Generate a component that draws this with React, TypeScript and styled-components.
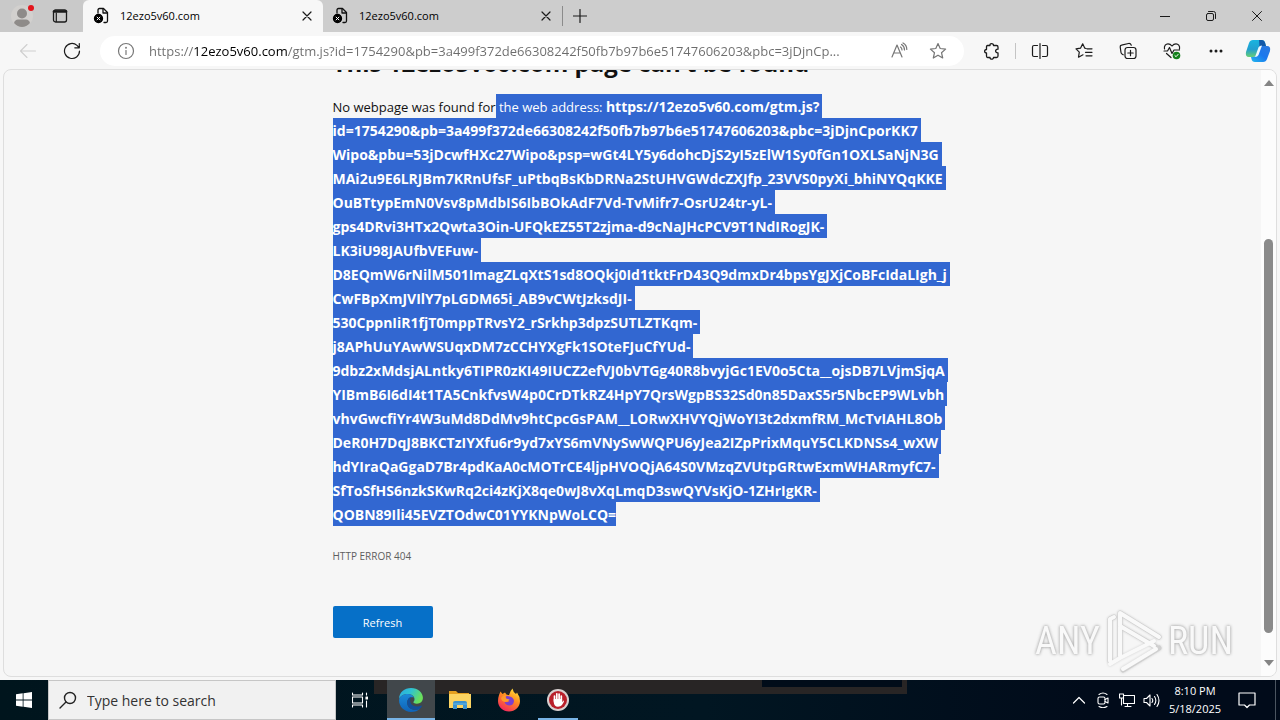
import React from 'react';
import styled, { createGlobalStyle } from 'styled-components';

const Global = createGlobalStyle`
  * { box-sizing: border-box; }
  body { margin: 0; font-family: "Open Sans", "Noto Sans", sans-serif; color: #111; }
  button { border: 0; padding: 0; background: none; font: inherit; color: inherit; }
  svg { display: block; }
`;

const Desktop = styled.div`
  display: flex;
  flex-direction: column;
  height: 100vh;
  overflow: hidden;
  background: #f7f7f7;
`;

const TabStrip = styled.header`
  display: flex;
  flex: none;
  height: 32px;
  background: #cdcdcd;
`;

const ProfileArea = styled.div`
  display: flex;
  align-items: center;
  width: 83px;
  padding-left: 10px;
  gap: 14px;
  background: #c9c9c9;
  border-bottom-right-radius: 4px;
`;

const IconButton = styled.button<{ $w?: number; $color?: string }>`
  display: flex;
  flex: none;
  align-items: center;
  justify-content: center;
  width: ${(p) => p.$w ?? 24}px;
  height: 100%;
  color: ${(p) => p.$color ?? '#1b1b1b'};
`;

const Tab = styled.div<{ $active?: boolean }>`
  display: flex;
  align-items: center;
  width: 240px;
  padding: 0 4px 0 9px;
  background: ${(p) => (p.$active ? '#f7f7f7' : 'transparent')};
  border-radius: ${(p) => (p.$active ? '6px 6px 0 0' : '0')};
`;

const InactiveTab = styled(Tab)`
  width: 239px;
  padding-left: 8px;
`;

const TabTitle = styled.span`
  flex: 1;
  padding-left: 10px;
  font-size: 11px;
  line-height: 16px;
  color: #000;
`;

const TabDivider = styled.span`
  align-self: center;
  width: 1px;
  height: 20px;
  background: #8b8b8b;
`;

const WindowControls = styled.div`
  display: flex;
  margin-left: auto;
`;

const Toolbar = styled.nav`
  display: flex;
  flex: none;
  align-items: center;
  height: 37px;
  padding: 0 2px 0 6px;
  background: #f7f7f7;
`;

const AddressBar = styled.label`
  display: flex;
  flex: 1;
  align-items: center;
  height: 30px;
  margin: 0 6px;
  padding: 0 6px 0 14px;
  border-radius: 15px;
  background: #fff;
`;

const AddressInput = styled.input`
  flex: 1;
  min-width: 0;
  height: 24px;
  margin: 0 2px 0 11px;
  padding: 0;
  border: 0;
  outline: 0;
  font-family: inherit;
  font-size: 13px;
  line-height: 24px;
  text-overflow: ellipsis;
  background: linear-gradient(90deg, #6c6c6c 45px, #000 45px, #000 139px, #6c6c6c 139px);
  background-clip: text;
  -webkit-text-fill-color: transparent;
`;

const ToolDivider = styled.span`
  width: 1px;
  height: 16px;
  margin: 0 2px 0 1px;
  background: #c4c4c4;
`;

const Viewport = styled.div`
  position: relative;
  display: flex;
  flex: 1;
  min-height: 0;
  margin: 0 3px 3px;
  border: 1px solid #dedede;
  border-radius: 8px;
  overflow: hidden;
  background: #f6f6f6;
`;

const Page = styled.main`
  flex: 1;
  min-width: 0;
  overflow: hidden;
`;

const Article = styled.article`
  width: 600px;
  max-width: 100%;
  margin: -25px auto 0;
`;

const Heading = styled.h1`
  margin: 0;
  font-size: 24px;
  line-height: 36px;
  font-weight: 700;
  white-space: nowrap;
`;

const Message = styled.p`
  margin: 13px 0 0;
  font-size: 14px;
  line-height: 26px;
  white-space: nowrap;
  color: #111;
`;

const Line = styled.span`
  display: block;
  height: 24px;
`;

const IntroLine = styled(Line)`
  font-size: 13px;
  strong { font-size: 14px; }
`;

const Selected = styled.span<{ $last?: boolean }>`
  display: inline-block;
  height: 24px;
  padding-right: ${(p) => (p.$last ? 0 : 3)}px;
  vertical-align: top;
  background: #3267d1;
  color: #fff;
  white-space: pre;
`;

const ErrorCode = styled.p`
  margin: 21px 0 0;
  font-size: 10px;
  line-height: 18px;
  color: #5e5e5e;
`;

const RefreshButton = styled.button`
  display: block;
  width: 100px;
  height: 32px;
  margin-top: 41px;
  border-radius: 2px;
  background: #0670c8;
  color: #fff;
  font-size: 11px;
`;

const Scrollbar = styled.div`
  display: flex;
  flex: none;
  flex-direction: column;
  align-items: center;
  width: 15px;
  padding: 9px 0;
  background: #fcfcfc;
`;

const ScrollSpace = styled.span<{ $grow: number }>`
  flex: ${(p) => p.$grow} 1 0;
`;

const ScrollThumb = styled.span`
  flex: 394 1 0;
  width: 9px;
  border-radius: 5px;
  background: #8a8a8a;
`;

const Watermark = styled.div`
  position: absolute;
  right: 43px;
  bottom: 2px;
  display: flex;
  align-items: center;
  gap: 5px;
  color: #f9f9f9;
  font-family: "Roboto Condensed", "Liberation Sans Narrow", Roboto, sans-serif;
  font-size: 38px;
  line-height: 66px;
  text-shadow: 0 0 3px #aaa;
  filter: drop-shadow(0 0 1px #ccc);
`;

const Taskbar = styled.footer`
  position: relative;
  display: flex;
  flex: none;
  height: 40px;
  background: linear-gradient(90deg, #00151d, #011622 55%, #010b1a 85%);
  color: #fff;
`;

const WindowEdge = styled.span`
  position: absolute;
  top: 0;
  left: 374px;
  width: 533px;
  height: 14px;
  padding: 0 5px 7px 388px;
  background: #282525;
  &::after {
    content: "";
    display: block;
    height: 7px;
    background: #010c19;
  }
`;

const StartButton = styled(IconButton)`
  width: 48px;
`;

const SearchBox = styled.label`
  display: flex;
  align-items: center;
  width: 288px;
  padding-left: 10px;
  gap: 10px;
  border: 1px solid #c6c6c6;
  background: #f1f1f1;
  color: #222;
`;

const SearchInput = styled.input`
  flex: 1;
  min-width: 0;
  padding: 0;
  border: 0;
  outline: 0;
  background: transparent;
  font-family: inherit;
  font-size: 14px;
  &::placeholder { color: #333; opacity: 1; }
`;

const AppRow = styled.div`
  position: relative;
  display: flex;
  gap: 1px;
  margin-left: 3px;
`;

const AppButton = styled.button<{ $active?: boolean; $running?: boolean }>`
  display: flex;
  align-items: center;
  justify-content: center;
  position: relative;
  width: 48px;
  height: 40px;
  background: ${(p) => (p.$active ? '#41474b' : 'transparent')};
  &::after {
    content: "";
    position: absolute;
    bottom: 0;
    left: ${(p) => (p.$active ? 0 : 4)}px;
    right: ${(p) => (p.$active ? 0 : 4)}px;
    height: 2px;
    background: ${(p) => (p.$active || p.$running ? '#78b4e6' : 'transparent')};
  }
`;

const Tray = styled.div`
  display: flex;
  align-items: center;
  margin-left: auto;
`;

const Clock = styled.time`
  width: 64px;
  font-size: 11px;
  line-height: 18px;
  text-align: center;
  white-space: nowrap;
`;

const ShowDesktop = styled.button`
  width: 5px;
  height: 40px;
  margin-left: 8px;
  border-left: 1px solid #4b5560;
`;

const urlLines = [
  'id=1754290&pb=3a499f372de66308242f50fb7b97b6e51747606203&pbc=3jDjnCporKK7',
  'Wipo&pbu=53jDcwfHXc27Wipo&psp=wGt4LY5y6dohcDjS2yI5zElW1Sy0fGn1OXLSaNjN3G',
  'MAi2u9E6LRJBm7KRnUfsF_uPtbqBsKbDRNa2StUHVGWdcZXJfp_23VVS0pyXi_bhiNYQqKKE',
  'OuBTtypEmN0Vsv8pMdbIS6IbBOkAdF7Vd-TvMifr7-OsrU24tr-yL-',
  'gps4DRvi3HTx2Qwta3Oin-UFQkEZ55T2zjma-d9cNaJHcPCV9T1NdIRogJK-',
  'LK3iU98JAUfbVEFuw-',
  'D8EQmW6rNilM501ImagZLqXtS1sd8OQkj0Id1tktFrD43Q9dmxDr4bpsYgJXjCoBFcIdaLIgh_j',
  'CwFBpXmJVIlY7pLGDM65i_AB9vCWtJzksdJI-',
  '530CppnIiR1fjT0mppTRvsY2_rSrkhp3dpzSUTLZTKqm-',
  'j8APhUuYAwWSUqxDM7zCCHYXgFk1SOteFJuCfYUd-',
  '9dbz2xMdsjALntky6TIPR0zKI49IUCZ2efVJ0bVTGg40R8bvyjGc1EV0o5Cta__ojsDB7LVjmSjqA',
  'YIBmB6I6dI4t1TA5CnkfvsW4p0CrDTkRZ4HpY7QrsWgpBS32Sd0n85DaxS5r5NbcEP9WLvbh',
  'vhvGwcfiYr4W3uMd8DdMv9htCpcGsPAM__LORwXHVYQjWoYI3t2dxmfRM_McTvIAHL8Ob',
  'DeR0H7DqJ8BKCTzIYXfu6r9yd7xYS6mVNySwWQPU6yJea2IZpPrixMquY5CLKDNSs4_wXW',
  'hdYIraQaGgaD7Br4pdKaA0cMOTrCE4ljpHVOQjA64S0VMzqZVUtpGRtwExmWHARmyfC7-',
  'SfToSfHS6nzkSKwRq2ci4zKjX8qe0wJ8vXqLmqD3swQYVsKjO-1ZHrIgKR-',
  'QOBN89Ili45EVZTOdwC01YYKNpWoLCQ=',
];

const shownUrl = 'https://12ezo5v60.com/gtm.js?id=1754290&pb=3a499f372de66308242f50fb7b97b6e51747606203&pbc=3jDjnCp...';

const Svg = ({ s = 16, children, w = 1.2 }: { s?: number; w?: number; children: React.ReactNode }) => (
  <svg width={s} height={s} viewBox={`0 0 ${s} ${s}`} fill="none" stroke="currentColor" strokeWidth={w} strokeLinecap="round" strokeLinejoin="round" aria-hidden="true">
    {children}
  </svg>
);

const PageErrorIcon = () => (
  <Svg s={18} w={1.3}>
    <path d="M6 6V3Q6 1.500 7.500 1.500H11.500L15.500 5.500V14Q15.500 15.500 14 15.500H12" />
    <path d="M11 1.800V6H15.200" />
    <circle cx="6.500" cy="11.500" r="4" fill="#000" stroke="#000" />
    <path d="M5.100 10.100l2.800 2.800M7.900 10.100l-2.800 2.800" stroke="#fff" strokeWidth="1" />
  </Svg>
);

const CloseIcon = () => <Svg s={10}><path d="M1 1l8 8M9 1L1 9" /></Svg>;

const tools: [string, React.ReactNode][] = [
  ['Split screen', <Svg s={18} key="s"><path d="M9 1.500v15M6.500 3.500H3Q1.500 3.500 1.500 5v8Q1.500 14.500 3 14.500H6.500M11.500 3.500H15Q16.500 3.500 16.500 5v8Q16.500 14.500 15 14.500H11.500" /></Svg>],
  ['Favorites', <Svg s={18} key="f"><path d="M11 6.500 9.800 6.200 7.700 1.800 5.500 6.200 1 6.900 4.300 10.200 3.500 15.200 8 12.800M12 6.800H17M10.500 10.300H17M11 13.800H17" /></Svg>],
  ['Collections', <Svg s={18} key="c"><rect x="6" y="5.500" width="11" height="11" rx="2.500" /><path d="M11.500 8.300v5.400M8.800 11h5.400M4.200 12.800 3.300 12.300Q2.200 11.700 2 10.500L1.200 5Q1 3.500 2.500 3.200L9.500 1.500Q11.500 1.200 12.300 3.200" /></Svg>],
  ['Browser essentials', <Svg s={18} key="b"><path d="M1.500 7C.8 3.500 3 1.800 5 1.800 7 1.800 8.200 3 9 4 9.800 3 11 1.800 13 1.800c2 0 4.200 1.700 3.500 5.200M3.500 11.500 8 15.500M1 9H4.500L6.500 5.500 9 11.500 11 8H16.500" /><circle cx="13.500" cy="13.500" r="3.800" fill="#13801b" stroke="none" /><path d="M11.900 13.600l1.200 1.100 2-2.300" stroke="#fff" strokeWidth="1" /></Svg>],
  ['Settings and more', <Svg s={16} key="m"><g fill="currentColor" stroke="none"><circle cx="3" cy="8" r="1.500" /><circle cx="8" cy="8" r="1.500" /><circle cx="13" cy="8" r="1.500" /></g></Svg>],
];

const Copilot = () => (
  <svg width="26" height="24" viewBox="0 0 26 24" aria-hidden="true">
    <defs>
      <linearGradient id="cpa" x1="0" y1="0" x2="0" y2="1"><stop stopColor="#19b4df" /><stop offset=".55" stopColor="#229fd0" /><stop offset="1" stopColor="#67cf74" /></linearGradient>
      <linearGradient id="cpb" x1="1" y1="0" x2="0" y2="1"><stop stopColor="#2e79dd" /><stop offset=".5" stopColor="#1b78ee" /><stop offset="1" stopColor="#22b8ee" /></linearGradient>
    </defs>
    <path d="M8 1H17Q19.500 1 20 3.500L21 7H17Q14.500 7 13.700 9.500L12 15Q11 18 8 18H4Q0 18 1 13L4 4Q5 1 8 1Z" fill="url(#cpa)" />
    <path d="M14 1H17Q19.500 1 20 3.500L21 7H17Q15 7 14.500 8Z" fill="#1459a8" />
    <path d="M18 23H10Q7 23 6.500 20L6 18H8Q11 18 12 15L13.700 9.500Q14.500 7 17 7H22Q26 7 25 12L22 20Q21 23 18 23Z" fill="url(#cpb)" />
    <path d="M13.500 8.500Q14.500 6.500 17 6.500L13.500 16Q12.500 18 10 18Z" fill="#eef9ff" />
  </svg>
);

const EdgeLogo = () => (
  <svg width="26" height="26" viewBox="0 0 24 24" aria-hidden="true">
    <defs>
      <linearGradient id="ea" x1="0" y1="0" x2="1" y2=".4"><stop stopColor="#2aa9e0" /><stop offset=".5" stopColor="#2fc3d2" /><stop offset="1" stopColor="#6be05a" /></linearGradient>
      <linearGradient id="eb" x1="0" y1="0" x2="0" y2="1"><stop stopColor="#1b8ad8" /><stop offset="1" stopColor="#0f63b8" /></linearGradient>
    </defs>
    <path d="M1 11C1 5 6 1 12 1c6.500 0 11 4.500 11 9 0 3.500-2.500 5.500-5.500 5.500-2.500 0-3.700-1-3.200-1.800.8-1 .9-1.700.9-2.700C15.200 8.500 12.500 6.500 9 6.500 5 6.500 2 8.500 1 11Z" fill="url(#ea)" />
    <path d="M1 12C1.500 8.500 5 6.500 9 6.500c3 0 5 1.500 5.800 3.200C11 8.500 8.500 11 8.500 14.500c0 4 3.500 6.500 7 6.500 2 0 3.500-.5 5-1.500C18.500 22 15.500 23 12 23 6 23 .7 18 1 12Z" fill="url(#eb)" />
    <path d="M8.500 14.500C8.500 11.500 10 9.500 12 9.200 9.500 14 13 18 17.500 18c1.500 0 2.500-.4 3.500-.8 .8-.3 1.200.5.7 1.200-1.500 2-3.700 3-6.200 2.600C11.500 20.500 8.500 18.500 8.500 14.500Z" fill="#124f9b" />
  </svg>
);

const Explorer = () => (
  <svg width="22" height="20" viewBox="0 0 22 20" aria-hidden="true">
    <path d="M0 1H7L9 3H20V8H0Z" fill="#e5a020" />
    <path d="M0 4H22V18H0Z" fill="#fcd462" />
    <path d="M4 19V13Q4 11 6 11H16Q18 11 18 13V19H14V15H8V19Z" fill="#3b93cf" />
    <path d="M4 14H18" stroke="#66b9e5" />
  </svg>
);

const Firefox = () => (
  <svg width="24" height="24" viewBox="0 0 24 24" aria-hidden="true">
    <defs><linearGradient id="ff" x1=".85" y1="0" x2=".3" y2="1"><stop stopColor="#ffe93a" /><stop offset=".45" stopColor="#ff8d20" /><stop offset="1" stopColor="#f5265e" /></linearGradient></defs>
    <path d="M2 7 3.500 3.500 5.500 6 8 4.500 9.500 6.500 12 7Q13 3 15.500.5 16 4 19 6L20 4.500Q23 8.500 23 13C23 19 18 23.500 12 23.500S1 19 1 13Q1 10 2 7Z" fill="url(#ff)" />
    <path d="M8 9Q10 7.500 12.500 8.500 16.500 9 17 13 16.500 17.500 12 17.500 8 17 7.500 13.500 10.500 15 12.500 13 10 12.500 8 9Z" fill="#7a3fd0" />
    <path d="M4 10Q6 6.500 9.500 7 8 8.500 9 10.500L12.500 11.500Q11 14 8 14 4.500 13.500 4 10Z" fill="#ff9a2b" />
  </svg>
);

const HandApp = () => (
  <svg width="24" height="24" viewBox="0 0 24 24" aria-hidden="true">
    <circle cx="12" cy="12" r="11" fill="#d8d0d0" /><circle cx="12" cy="12" r="9" fill="#b91f2a" />
    <path d="M8.500 13V8M10.800 12V5.800M13.100 12V6M15.300 13V8" stroke="#fff" strokeWidth="1.700" strokeLinecap="round" />
    <path d="M7.700 11H16.100V14L18 12.300Q18.500 14 16 17 14.500 18.800 12 18.800 8 18.500 7.700 14Z" fill="#fff" />
  </svg>
);

export default function App() {
  return (
    <Desktop>
      <Global />
      <TabStrip>
        <ProfileArea>
          <IconButton aria-label="Profile">
            <svg width="24" height="24" viewBox="0 0 24 24"><circle cx="12" cy="12" r="11" fill="#d2d0ce" /><circle cx="12" cy="9.500" r="5" fill="#8e8b89" /><path d="M4 19Q5 15.500 8 15.500H16Q19 15.500 20 19 16.500 23 12 23T4 19Z" fill="#8e8b89" /><circle cx="21" cy="4" r="3" fill="#e3141c" /></svg>
          </IconButton>
          <IconButton aria-label="Tab actions">
            <Svg s={16} w={1.3}><rect x="1.500" y="2" width="13" height="12" rx="2" /><path d="M2 3.500H14" strokeWidth="2.600" /><path d="M4.300 5V13.500" strokeWidth="1.200" /></Svg>
          </IconButton>
        </ProfileArea>
        <Tab $active><PageErrorIcon /><TabTitle>12ezo5v60.com</TabTitle><IconButton aria-label="Close tab"><CloseIcon /></IconButton></Tab>
        <InactiveTab><PageErrorIcon /><TabTitle>12ezo5v60.com</TabTitle><IconButton aria-label="Close tab"><CloseIcon /></IconButton></InactiveTab>
        <TabDivider />
        <IconButton $w={34} aria-label="New tab"><Svg s={14}><path d="M7 .5v13M.5 7h13" /></Svg></IconButton>
        <WindowControls>
          <IconButton $w={46} aria-label="Minimize"><Svg s={10} w={1}><path d="M0 5.500H10" /></Svg></IconButton>
          <IconButton $w={46} aria-label="Restore"><Svg s={10} w={1}><rect x=".5" y="2.500" width="7" height="7" rx="1.500" /><path d="M2.500 .5H7.500Q9.500 .5 9.500 2.500V7.500" /></Svg></IconButton>
          <IconButton $w={46} aria-label="Close"><Svg s={10} w={1}><path d="M.5 .5l9 9M9.500 .5l-9 9" /></Svg></IconButton>
        </WindowControls>
      </TabStrip>

      <Toolbar>
        <IconButton $w={44} $color="#cfcfcf" aria-label="Back"><Svg s={18} w={1.1}><path d="M16.500 9H1.500M8 2.500 1.500 9 8 15.500" /></Svg></IconButton>
        <IconButton $w={44} aria-label="Reload"><Svg s={18} w={1.2}><path d="M16.500 9A7.500 7.500 0 1 1 14 3.400L16 5.500M16.300 1.500V5.800H11.800" /></Svg></IconButton>
        <AddressBar>
          <Svg s={24} w={1.2}><g stroke="#777"><circle cx="12" cy="12" r="7.500" /><path d="M12 11.500v4" /><circle cx="12" cy="8.700" r=".4" /></g></Svg>
          <AddressInput aria-label="Address" defaultValue={shownUrl} />
          <IconButton $w={38} $color="#767676" aria-label="Read aloud"><Svg s={18}><path d="M2 15 7 3 12 15M3.800 11H10.200M10.500 5Q12 6 12 8M11.500 2.500Q14.500 4.200 14.500 8M13 1Q16.800 3 16.800 7.500" /></Svg></IconButton>
          <IconButton $w={40} $color="#767676" aria-label="Add to favorites"><Svg s={18}><path d="M9 1.500 11.200 6.500 16.600 7.100 12.500 10.700 13.700 16 9 13.200 4.300 16 5.500 10.700 1.400 7.100 6.800 6.500Z" /></Svg></IconButton>
        </AddressBar>
        <IconButton $w={44} aria-label="Extensions"><Svg s={18} w={1.3}><path d="M4.500 3.500H7C6.500 1 10.500 .8 10.500 3.500H13.500Q15 3.500 15 5V7.200C11.800 6.800 11.800 11.200 15 10.800V14Q15 15.500 13.500 15.500H10.500C10.500 17.800 6.800 17.600 7 15.500H4.500Q3.500 15.500 3.500 14V11C1 11 1 7.500 3.500 7.500V5Q3.500 3.500 4.500 3.500Z" /></Svg></IconButton>
        <ToolDivider />
        {tools.map(([name, icon]) => <IconButton key={name} $w={44} aria-label={name}>{icon}</IconButton>)}
        <IconButton $w={40} aria-label="Copilot"><Copilot /></IconButton>
      </Toolbar>

      <Viewport>
        <Page>
          <Article>
            <Heading>This 12ezo5v60.com page can’t be found</Heading>
            <Message>
              <IntroLine>No webpage was found for<Selected> the web address: <strong>https://12ezo5v60.com/gtm.js?</strong></Selected></IntroLine>
              {urlLines.map((text, i) => (
                <Line key={text}><Selected as="strong" $last={i === urlLines.length - 1}>{text}</Selected></Line>
              ))}
            </Message>
            <ErrorCode>HTTP ERROR 404</ErrorCode>
            <RefreshButton>Refresh</RefreshButton>
          </Article>
        </Page>
        <Scrollbar>
          <svg width="10" height="7" viewBox="0 0 10 7"><path d="M0 7 5 1l5 6Z" fill="#858585" /></svg>
          <ScrollSpace $grow={153} />
          <ScrollThumb />
          <ScrollSpace $grow={27} />
          <svg width="10" height="7" viewBox="0 0 10 7"><path d="M0 0H10L5 6Z" fill="#858585" /></svg>
        </Scrollbar>
        <Watermark>
          <span>ANY</span>
          <svg width="58" height="64" viewBox="0 0 58 64" fill="none" stroke="#f9f9f9" strokeWidth="4" strokeLinejoin="round" strokeLinecap="round">
            <path d="M5 52V10L9 8M15 47V4L54 28M15 17 51 38M18 61 54 39" stroke="#cfcfcf" strokeWidth="5" />
            <path d="M5 52V10L9 8M15 47V4L54 28M15 17 49 37M5 55 15 49 49 32M18 60 51 40" />
          </svg>
          <span>RUN</span>
        </Watermark>
      </Viewport>

      <Taskbar>
        <WindowEdge />
        <StartButton aria-label="Start"><svg width="16" height="16" viewBox="0 0 16 16" fill="#fff"><path d="M0 2.200 6.700 1.300V7.600H0ZM7.500 1.200 16 0V7.600H7.500ZM0 8.400H6.700V14.700L0 13.800ZM7.500 8.400H16V16L7.500 14.800Z" /></svg></StartButton>
        <SearchBox>
          <Svg s={18} w={1.4}><circle cx="11" cy="7" r="5.500" /><path d="M7 11 1 17" /></Svg>
          <SearchInput aria-label="Search" placeholder="Type here to search" />
        </SearchBox>
        <IconButton $w={48} $color="#fff" aria-label="Task view"><Svg s={16} w={1.1}><path d="M.5 1V3H10.500V1M.5 15V13H10.500V15M14.500 1V3M14.500 9V15" /><rect x=".5" y="5" width="10" height="6" /><rect x="14" y="5" width="1.500" height="2" fill="#fff" /></Svg></IconButton>
        <AppRow>
          <AppButton $active aria-label="Microsoft Edge"><EdgeLogo /></AppButton>
          <AppButton aria-label="File Explorer"><Explorer /></AppButton>
          <AppButton aria-label="Firefox"><Firefox /></AppButton>
          <AppButton $running aria-label="Blocker"><HandApp /></AppButton>
        </AppRow>
        <Tray>
          <IconButton $color="#fff" aria-label="Show hidden icons"><Svg s={14}><path d="M1.500 10 7 4.500 12.500 10" /></Svg></IconButton>
          <IconButton $color="#fff" aria-label="Meet now"><Svg s={16} w={1.1}><rect x="3" y="5" width="7" height="7" rx="1.500" /><path d="M10 7.500 13 6V11L10 9.500M4 2.500Q8 -.5 12 2.500M4 14.500Q8 17 12 14.500" /></Svg></IconButton>
          <IconButton $color="#fff" aria-label="Network"><Svg s={16} w={1.1}><path d="M4.500 3.500H15.500V11.500H4.500V6M8.500 11.500V14.500M6 14.500H12M.5 2H4.500V6H.5ZM2.500 6V13" /></Svg></IconButton>
          <IconButton $color="#fff" aria-label="Volume"><Svg s={17} w={1.1}><path d="M1 6.500H3.500L7 3V14L3.500 10.500H1ZM9 6.500Q10.500 8.500 9 10.500M11.500 4.500Q14.200 8.500 11.500 12.500M14 2.500Q18 8.500 14 14.500" /></Svg></IconButton>
          <Clock>8:10 PM<br />5/18/2025</Clock>
          <IconButton $w={40} $color="#fff" aria-label="Notifications"><Svg s={18}><path d="M1 2H17V14H11.500L9 16.500 6.500 14H1Z" /></Svg></IconButton>
          <ShowDesktop aria-label="Show desktop" />
        </Tray>
      </Taskbar>
    </Desktop>
  );
}
